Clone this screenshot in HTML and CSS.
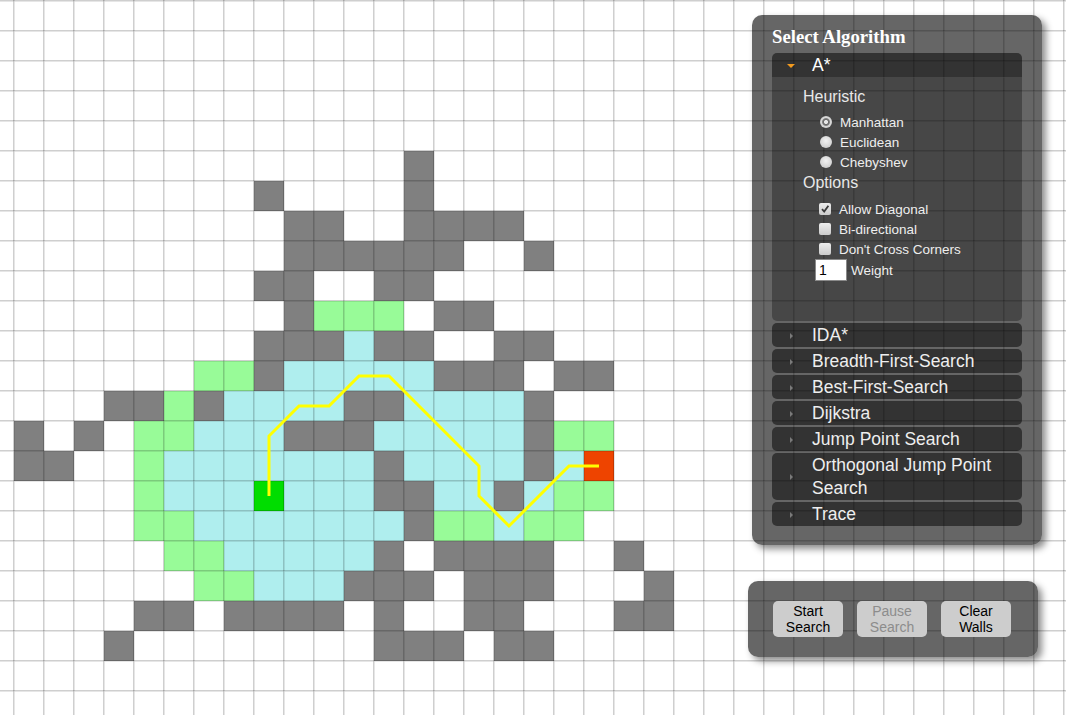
FILE: index.html
```html
<!DOCTYPE html>
<html lang="en">
<head>
<meta charset="utf-8">
<title>PathFinding.js</title>
<link rel="stylesheet" href="styles.css">
</head>
<body>
<div id="draw_area" class="draw-area"></div>

<div id="algorithm_panel" class="panel algorithm-panel">
  <h3 class="panel-title">Select Algorithm</h3>
  <div class="accordion">
    <div class="acc-header active"><span class="icon icon-open"></span><span class="acc-label">A*</span></div>
    <div class="acc-content">
      <div class="group-title">Heuristic</div>
      <label class="opt"><span class="radio checked"></span>Manhattan</label>
      <label class="opt"><span class="radio"></span>Euclidean</label>
      <label class="opt"><span class="radio"></span>Chebyshev</label>
      <div class="group-title options-title">Options</div>
      <label class="opt"><span class="cb"><svg class="check" viewBox="0 0 12 12" width="12" height="12"><path d="M3 6.2 L5.2 8.6 L9.4 2.8" fill="none" stroke="#3a3a3a" stroke-width="1.8"/></svg></span>Allow Diagonal</label>
      <label class="opt"><span class="cb"></span>Bi-directional</label>
      <label class="opt"><span class="cb"></span>Don't Cross Corners</label>
      <div class="weight-row"><input class="weight" type="text" value="1"><span class="weight-label">Weight</span></div>
    </div>
    <div class="acc-header"><span class="icon"></span><span class="acc-label">IDA*</span></div>
    <div class="acc-header"><span class="icon"></span><span class="acc-label">Breadth-First-Search</span></div>
    <div class="acc-header"><span class="icon"></span><span class="acc-label">Best-First-Search</span></div>
    <div class="acc-header"><span class="icon"></span><span class="acc-label">Dijkstra</span></div>
    <div class="acc-header"><span class="icon"></span><span class="acc-label">Jump Point Search</span></div>
    <div class="acc-header"><span class="icon"></span><span class="acc-label">Orthogonal Jump Point Search</span></div>
    <div class="acc-header"><span class="icon"></span><span class="acc-label">Trace</span></div>
  </div>
</div>

<div id="play_panel" class="panel play-panel">
  <button class="control-button">Start Search</button>
  <button class="control-button" disabled>Pause Search</button>
  <button class="control-button">Clear Walls</button>
</div>

<script src="script.js"></script>
</body>
</html>
```

FILE: styles.css
```css
html, body {
  margin: 0;
  padding: 0;
  background: #fff;
  overflow: hidden;
}

body {
  width: 1066px;
  height: 715px;
  position: relative;
  font-family: "Liberation Sans", Arial, sans-serif;
}

.draw-area {
  width: 1066px;
  height: 715px;
}

.draw-area svg {
  display: block;
}

.panel {
  position: absolute;
  background: rgba(0, 0, 0, 0.6);
  border-radius: 10px;
  box-shadow: 4px 4px 7px rgba(0, 0, 0, 0.45);
}

.algorithm-panel {
  left: 752px;
  top: 15px;
  width: 250px;
  padding: 11px 20px 19px;
}

.panel-title {
  margin: 0 0 6px;
  font-family: "Liberation Serif", "Times New Roman", serif;
  font-weight: bold;
  font-size: 18.72px;
  line-height: 21px;
  color: #fff;
}

.accordion {
  display: flex;
  flex-direction: column;
}

.acc-header {
  display: flex;
  align-items: center;
  background: rgba(0, 0, 0, 0.5);
  border-radius: 5px;
  padding-top: 1px;
  margin-top: 2px;
  color: #eee;
  font-size: 17.5px;
  line-height: 23px;
}

.acc-header.active {
  margin-top: 0;
  border-radius: 5px 5px 0 0;
  border-bottom: 1px solid rgba(255, 255, 255, 0.1);
  color: #fff;
}

.icon {
  flex: none;
  width: 8px;
  height: 8px;
  margin: 0 17px 0 15px;
  display: flex;
  align-items: center;
  justify-content: center;
}

.icon::before {
  content: "";
  display: block;
  border-top: 3px solid transparent;
  border-bottom: 3px solid transparent;
  border-left: 3px solid #7a7a7a;
}

.icon-open::before {
  border-left: 4px solid transparent;
  border-right: 4px solid transparent;
  border-top: 4px solid #f29a1f;
  border-bottom: 0;
}

.acc-content {
  box-sizing: border-box;
  height: 243px;
  background: rgba(0, 0, 0, 0.3);
  border-radius: 0 0 5px 5px;
  padding: 9px 0 0 31px;
  color: #e8e8e8;
}

.group-title {
  font-size: 16px;
  line-height: 20px;
  margin-bottom: 5px;
}

.options-title {
  margin-top: 1px;
  margin-bottom: 6px;
}

.opt {
  display: flex;
  align-items: center;
  height: 20px;
  font-size: 13.5px;
  color: #eee;
}

.radio {
  flex: none;
  width: 12px;
  height: 12px;
  border-radius: 50%;
  margin: 0 8px 0 17px;
  background: radial-gradient(circle at 50% 40%, #f2f2f2 0, #d2d2d2 70%, #b8b8b8 100%);
}

.radio.checked {
  background: radial-gradient(circle, #e6e6e6 0, #e6e6e6 1.6px, #6a6a6a 2.4px, #7a7a7a 3.4px, #d8d8d8 4.4px, #c8c8c8 100%);
}

.cb {
  flex: none;
  width: 12px;
  height: 12px;
  border-radius: 2px;
  margin: 0 8px 0 16px;
  background: linear-gradient(#ededed, #cacaca);
  display: flex;
}

.check {
  display: block;
}

.weight-row {
  display: flex;
  align-items: center;
  height: 22px;
  font-size: 13.5px;
  color: #eee;
}

.weight {
  box-sizing: border-box;
  width: 32px;
  height: 22px;
  margin: 0 4px 0 12px;
  padding: 0 0 0 3px;
  border: 1px solid #8a8a8a;
  background: #fff;
  font-family: "Liberation Sans", Arial, sans-serif;
  font-size: 14px;
  color: #000;
}

.play-panel {
  left: 748px;
  top: 581px;
  width: 240px;
  padding: 20px 25px;
  display: flex;
  gap: 14px;
}

.control-button {
  flex: none;
  width: 70px;
  height: 36px;
  padding: 0;
  border: none;
  border-radius: 5px;
  background: #cdcdcd;
  color: #000;
  font-family: "Liberation Sans", Arial, sans-serif;
  font-size: 14px;
  line-height: 16px;
}

.control-button:disabled {
  color: #8c8c8c;
}
```

FILE: script.js
```js
(function () {
  var NS = "http://www.w3.org/2000/svg";
  var CELL = 30, OX = 14, OY = 1;
  var FIRST_ROW = 5;
  var map = [
    ".............#........",
    "........#....#........",
    ".........##..####.....",
    ".........######..#....",
    "........##..##........",
    ".........#ooo.##......",
    "........###c##..##....",
    "......oo#ccccc###.##..",
    "...##o#cccc##cccc#....",
    "#.#.ooccc###ccccc#oo..",
    "##..occccccc#cccc#cE..",
    "....occcSccc##cc#coo..",
    "....ooccccccc#oocoo...",
    ".....ooccccc#.####..#.",
    "......ooccc###.###...#",
    "....##.####.#..##...##",
    "...#........###.##...."
  ];
  var colors = {
    "#": "#808080",
    "o": "#98fb98",
    "c": "#afeeee",
    "S": "#00dd00",
    "E": "#ee4400"
  };

  var svg = document.createElementNS(NS, "svg");
  svg.setAttribute("width", "1066");
  svg.setAttribute("height", "715");

  for (var r = -1; r <= 23; r++) {
    for (var c = -1; c <= 35; c++) {
      var ch = ".";
      var mr = r - FIRST_ROW;
      if (mr >= 0 && mr < map.length && c >= 0 && c < map[mr].length) {
        ch = map[mr].charAt(c);
      }
      var rect = document.createElementNS(NS, "rect");
      rect.setAttribute("x", OX + c * CELL);
      rect.setAttribute("y", OY + r * CELL);
      rect.setAttribute("width", CELL);
      rect.setAttribute("height", CELL);
      rect.setAttribute("fill", colors[ch] || "#ffffff");
      rect.setAttribute("stroke", "#000");
      rect.setAttribute("stroke-opacity", "0.2");
      rect.setAttribute("stroke-width", "1");
      svg.appendChild(rect);
    }
  }

  var path = document.createElementNS(NS, "polyline");
  path.setAttribute("points", "269,496 269,436 299,406 329,406 359,376 389,376 479,466 479,496 509,526 569,466 599,466");
  path.setAttribute("fill", "none");
  path.setAttribute("stroke", "#ffff00");
  path.setAttribute("stroke-width", "3");
  svg.appendChild(path);

  document.getElementById("draw_area").appendChild(svg);
})();
```
